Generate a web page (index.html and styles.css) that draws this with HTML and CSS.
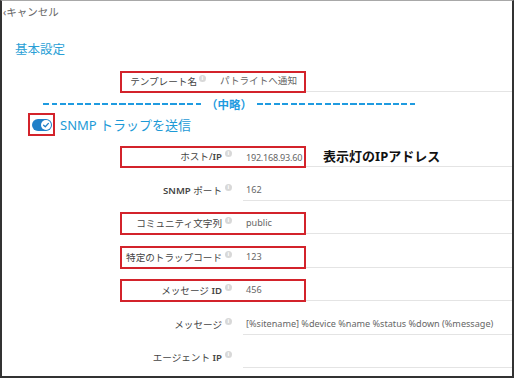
FILE: index.html
```html
<!DOCTYPE html>
<html lang="ja">
<head>
    <meta charset="UTF-8">
    <title>SNMP トラップを送信</title>
    <link rel="stylesheet" href="styles.css">
</head>
<body>
    <div class="frame">
        <!-- Top bar -->
        <div class="topbar">‹キャンセル</div>

        <div class="title">基本設定</div>

        <!-- Template name -->
        <div class="row row-short row-top">
            <div class="lbl">テンプレート名</div>
            <span class="info">i</span>
            <div class="val">パトライトへ通知</div>
            <div class="mark"></div>
        </div>

        <!-- Omitted part -->
        <div class="divider">
            <div class="dash"></div>
            <span class="omit">（中略）</span>
            <div class="dash"></div>
        </div>

        <!-- SNMP trap toggle -->
        <div class="toggle-row">
            <div class="toggle-box">
                <div class="toggle">
                    <div class="knob">
                        <svg width="8" height="8" viewBox="0 0 8 8"><path d="M1.6 4.2 L3.3 5.8 L6.4 2.4" fill="none" stroke="#1f7fc8" stroke-width="1.3" stroke-linecap="round" stroke-linejoin="round"/></svg>
                    </div>
                </div>
            </div>
            <span class="toggle-label">SNMP トラップを送信</span>
        </div>

        <div class="row row-short row-host">
            <div class="lbl">ホスト/<b>IP</b></div>
            <span class="info">i</span>
            <div class="val"><span class="ip">192.168.93.60</span><span class="note">表示灯のIPアドレス</span></div>
            <div class="mark"></div>
        </div>

        <div class="row">
            <div class="lbl"><b>SNMP</b> ポート</div>
            <span class="info">i</span>
            <div class="val">162</div>
        </div>

        <div class="row">
            <div class="lbl">コミュニティ文字列</div>
            <span class="info">i</span>
            <div class="val">public</div>
            <div class="mark"></div>
        </div>

        <div class="row">
            <div class="lbl">特定のトラップコード</div>
            <span class="info">i</span>
            <div class="val">123</div>
            <div class="mark"></div>
        </div>

        <div class="row">
            <div class="lbl">メッセージ <b>ID</b></div>
            <span class="info">i</span>
            <div class="val">456</div>
            <div class="mark"></div>
        </div>

        <div class="row">
            <div class="lbl">メッセージ</div>
            <span class="info">i</span>
            <div class="val">[%sitename] %device %name %status %down (%message)</div>
        </div>

        <div class="row">
            <div class="lbl">エージェント <b>IP</b></div>
            <span class="info">i</span>
            <div class="val"></div>
        </div>
    </div>
</body>
</html>
```

FILE: styles.css
```css
body {
    margin: 0;
    background: #fff;
    font-family: "Noto Sans", "Noto Sans CJK JP", sans-serif;
}

.frame {
    box-sizing: border-box;
    width: 514px;
    height: 378px;
    border-top: 1px solid #a8a8a8;
    border-left: 2px solid #333;
    border-right: 2px solid #333;
    border-bottom: 2px solid #333;
    overflow: hidden;
}

.topbar {
    height: 22px;
    line-height: 22px;
    padding-left: 1px;
    font-size: 10.5px;
    color: #666;
}

.title {
    margin-top: 18px;
    padding-left: 13px;
    line-height: 18px;
    font-size: 12.5px;
    color: #2a9fd6;
}

/* Form rows */
.row {
    position: relative;
    display: flex;
    align-items: flex-end;
    height: 33.5px;
    font-size: 9.6px;
    color: #555;
}

.row-short {
    height: 22px;
}

.row-top {
    margin-top: 11px;
}

.row-host {
    margin-top: 9px;
}

.lbl {
    width: 220px;
    flex-shrink: 0;
    text-align: right;
    line-height: 20px;
    color: #444;
}

.lbl b {
    font-weight: 600;
}

.info {
    flex-shrink: 0;
    width: 7px;
    height: 7px;
    margin: 0 11px 10px 3px;
    border-radius: 50%;
    background: #d8d8d8;
    color: #fff;
    font-size: 6px;
    line-height: 7px;
    text-align: center;
    font-weight: 700;
}

.val {
    flex: 1;
    height: 20px;
    line-height: 20px;
    padding-left: 3px;
    border-bottom: 1px solid #e4e4e4;
    font-size: 9.1px;
    color: #666;
    white-space: nowrap;
}

.row-top .lbl {
    width: 195px;
}

.row-top .info {
    margin: 0 11px 10px 2px;
}

.row-top .val {
    font-size: 9.6px;
}

.ip {
    letter-spacing: -0.25px;
}

.note {
    margin-left: 21px;
    font-size: 13px;
    font-weight: 700;
    color: #111;
}

/* Red annotation boxes */
.mark {
    position: absolute;
    left: 118px;
    bottom: -1px;
    width: 186px;
    height: 23px;
    box-sizing: border-box;
    border: 2px solid #d3232b;
}

.row-short .mark {
    height: 22px;
}

/* Omitted-part divider */
.divider {
    display: flex;
    align-items: center;
    height: 12px;
    margin: 6px 0 0 41px;
    width: 372px;
    gap: 2px;
}

.dash {
    flex: 1;
    height: 2px;
    background: repeating-linear-gradient(90deg, #1f9be0 0 6px, transparent 6px 8.5px);
}

.omit {
    margin: 0 3px;
    font-family: "Noto Sans CJK JP", sans-serif;
    font-size: 11.5px;
    font-weight: 700;
    color: #1f9be0;
}

/* SNMP trap toggle */
.toggle-row {
    display: flex;
    align-items: center;
    height: 23px;
    margin-top: 3px;
}

.toggle-box {
    box-sizing: border-box;
    width: 27px;
    height: 23px;
    margin-left: 26px;
    border: 2px solid #d3232b;
    display: flex;
    align-items: center;
    justify-content: center;
}

.toggle {
    width: 20px;
    height: 12px;
    border-radius: 6px;
    background: #1f7fc8;
    display: flex;
    align-items: center;
    justify-content: flex-end;
    padding-right: 1px;
    box-sizing: border-box;
}

.knob {
    width: 10px;
    height: 10px;
    border-radius: 50%;
    background: #fff;
    display: flex;
    align-items: center;
    justify-content: center;
}

.toggle-label {
    margin-left: 5px;
    font-size: 13px;
    color: #1d9ad6;
}
```
